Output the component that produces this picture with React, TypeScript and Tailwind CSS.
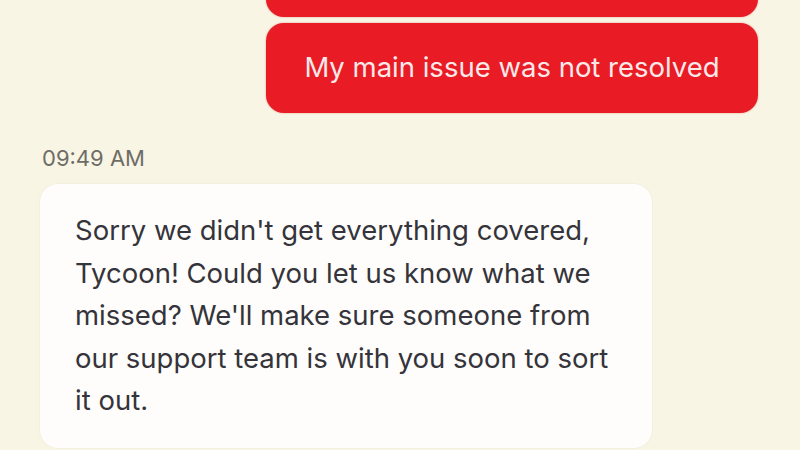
export default function App() {
  return (
    <div className="h-[450px] w-[800px] overflow-hidden bg-[#f8f5e4] font-['Inter','Liberation_Sans',sans-serif]">
      <div className="flex flex-col items-end gap-[6px] pr-[42px] -mt-[40px]">
        <div className="h-[57px] w-[492px] rounded-[18px] bg-[#e91b25] shadow-[0_0_2px_rgba(200,0,0,0.4)]" />
        <div className="flex h-[90px] w-[492px] items-center justify-center rounded-[18px] bg-[#e91b25] shadow-[0_0_2px_rgba(200,0,0,0.4)]">
          <span className="text-[27.5px] text-[#fbe9ea]">My main issue was not resolved</span>
        </div>
      </div>
      <div className="mt-[33px] pl-[42px] text-[22px] leading-[24px] text-[#6e6c66]">09:49 AM</div>
      <div className="mt-[14px] ml-[40px] w-[612px] rounded-[18px] bg-[#fefdfb] pl-[35px] pr-[30px] pt-[25px] pb-[26px] shadow-[0_0_2px_rgba(0,0,0,0.08)]">
        <p className="text-[27.5px] leading-[42.5px] text-[#34343a]">
          Sorry we didn't get everything covered, Tycoon! Could you let us know what we missed? We'll make sure someone from our support team is with you soon to sort it out.
        </p>
      </div>
    </div>
  );
}
